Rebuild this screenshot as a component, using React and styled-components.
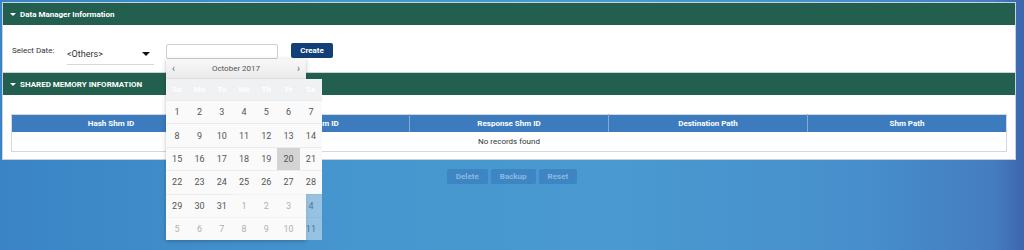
import React from "react";
import styled, { createGlobalStyle } from "styled-components";

const GlobalStyle = createGlobalStyle`
  html, body {
    margin: 0;
    padding: 0;
  }
  body {
    width: 1024px;
    height: 250px;
    overflow: hidden;
    font-family: Roboto, "Liberation Sans", Arial, sans-serif;
    background: linear-gradient(90deg, #3a84c5 0%, #4696cf 35%, #4a9ad1 58%, #478fcc 84%, #447dc0 97%, #3d66ae 100%);
  }
`;

const weekDays = ["Su", "Mo", "Tu", "We", "Th", "Fr", "Sa"];

// october 2017 with the days of november after it
const calendarDays = [
  ...Array.from({ length: 31 }, (_, i) => ({ day: i + 1, other: false })),
  ...Array.from({ length: 11 }, (_, i) => ({ day: i + 1, other: true })),
];

const columns = ["Hash Shm ID", "Request Shm ID", "Response Shm ID", "Destination Path", "Shm Path"];

const App = () => {
  return (
    <>
      <GlobalStyle />
      <Page>
        <Panel>
          <PanelHeader>
            <Caret />
            Data Manager Information
          </PanelHeader>
          <DateRow>
            <Label>Select Date:</Label>
            <Dropdown>
              <span>&lt;Others&gt;</span>
              <DropCaret />
            </Dropdown>
            <InputWrap>
              <DateInput />
              <Popup>
                <CalHead>
                  <NavArrow>‹</NavArrow>
                  <span>October 2017</span>
                  <NavArrow>›</NavArrow>
                </CalHead>
                <CalGrid>
                  {weekDays.map((d) => (
                    <WeekDay key={d}>{d}</WeekDay>
                  ))}
                  {calendarDays.map((c, i) => (
                    <DayCell key={i} $other={c.other} $selected={!c.other && c.day === 20}>
                      {c.day}
                    </DayCell>
                  ))}
                </CalGrid>
              </Popup>
            </InputWrap>
            <CreateButton>Create</CreateButton>
          </DateRow>
        </Panel>

        <Panel>
          <PanelHeader>
            <Caret />
            SHARED MEMORY INFORMATION
          </PanelHeader>
          <TableWrap>
            <Table>
              <thead>
                <tr>
                  {columns.map((c) => (
                    <Th key={c}>{c}</Th>
                  ))}
                </tr>
              </thead>
              <tbody>
                <tr>
                  <EmptyCell colSpan={5}>No records found</EmptyCell>
                </tr>
              </tbody>
            </Table>
          </TableWrap>
        </Panel>

        <ButtonRow>
          <ActionButton>Delete</ActionButton>
          <ActionButton>Backup</ActionButton>
          <ActionButton>Reset</ActionButton>
        </ButtonRow>
      </Page>
    </>
  );
};

const Page = styled.div`
  padding: 2px 8px 0 2px;
`;

const Panel = styled.section`
  background: #fff;
  border: 1px solid #c8d2dc;
  border-top: none;
  &:first-child {
    border-top: 1px solid #c8d2dc;
  }
`;

const PanelHeader = styled.div`
  height: 22px;
  display: flex;
  align-items: center;
  gap: 4px;
  padding-left: 7px;
  background: #235f4f;
  color: #fff;
  font-size: 8px;
  font-weight: 700;
`;

const Caret = styled.span`
  width: 0;
  height: 0;
  border-left: 3px solid transparent;
  border-right: 3px solid transparent;
  border-top: 3px solid #fff;
`;

const DateRow = styled.div`
  height: 47px;
  box-sizing: border-box;
  display: flex;
  align-items: flex-start;
  padding: 18px 0 0 9px;
`;

const Label = styled.span`
  margin-top: 3px;
  font-size: 8px;
  color: #333;
  width: 55px;
`;

const Dropdown = styled.div`
  width: 87px;
  height: 22px;
  box-sizing: border-box;
  display: flex;
  align-items: center;
  justify-content: space-between;
  padding: 0 4px 0 0;
  border-bottom: 1px solid #d8d8d8;
  font-size: 9px;
  color: #333;
`;

const DropCaret = styled.span`
  width: 0;
  height: 0;
  border-left: 4px solid transparent;
  border-right: 4px solid transparent;
  border-top: 4px solid #111;
`;

const InputWrap = styled.div`
  position: relative;
  margin: 1px 0 0 12px;
`;

const DateInput = styled.div`
  width: 112px;
  height: 15px;
  box-sizing: border-box;
  border: 1px solid #cfcfcf;
  border-radius: 2px;
  background: #fff;
`;

const Popup = styled.div`
  position: absolute;
  left: 0;
  top: 15px;
  width: 140px;
  z-index: 5;
  background: #fafafa;
  box-shadow: 0 1px 4px rgba(0, 0, 0, 0.25);
`;

const CalHead = styled.div`
  height: 19px;
  display: flex;
  align-items: center;
  justify-content: space-between;
  padding: 0 6px;
  background: linear-gradient(#f8f8f8, #ebebeb);
  border-bottom: 1px solid #dcdcdc;
  font-size: 8px;
  color: #555;
`;

const NavArrow = styled.span`
  font-size: 10px;
  color: #666;
`;

const CalGrid = styled.div`
  display: grid;
  width: 156px;
  grid-template-columns: repeat(7, 22.3px);
  grid-auto-rows: 23.4px;
  grid-template-rows: 21px;
`;

const WeekDay = styled.div`
  display: flex;
  align-items: center;
  justify-content: center;
  background: #f0f1f3;
  color: #fff;
  font-size: 8px;
  font-weight: 700;
`;

const DayCell = styled.div`
  display: flex;
  align-items: center;
  justify-content: center;
  box-sizing: border-box;
  border-top: 1px solid #ececec;
  font-size: 9px;
  color: #555;
  background: ${(p) => (p.$selected ? "#d3d3d3" : "#fafafa")};
  opacity: ${(p) => (p.$other ? 0.45 : 1)};
`;

const CreateButton = styled.button`
  margin-left: 13px;
  width: 42px;
  height: 15px;
  padding: 0;
  border: none;
  border-radius: 2px;
  background: #113f76;
  color: #fff;
  font-family: inherit;
  font-size: 8px;
  font-weight: 700;
`;

const TableWrap = styled.div`
  padding: 19px 8px 7px 8px;
`;

const Table = styled.table`
  width: 100%;
  border-collapse: collapse;
  table-layout: fixed;
  border: 1px solid #d3d8de;
`;

const Th = styled.th`
  height: 17px;
  padding: 0;
  background: #3d7bbf;
  color: #fff;
  font-size: 8px;
  font-weight: 700;
  border-left: 1px solid #86a9d3;
  &:first-child {
    border-left: none;
  }
`;

const EmptyCell = styled.td`
  height: 19px;
  padding: 0;
  text-align: center;
  font-size: 8px;
  color: #333;
`;

const ButtonRow = styled.div`
  display: flex;
  justify-content: center;
  gap: 3px;
  margin-top: 9px;
  padding-left: 6px;
`;

const ActionButton = styled.button`
  height: 15px;
  padding: 0 9px;
  border: none;
  border-radius: 2px;
  background: #3e86c3;
  color: #8bb9df;
  font-family: inherit;
  font-size: 8px;
  font-weight: 700;
`;

export default App;
